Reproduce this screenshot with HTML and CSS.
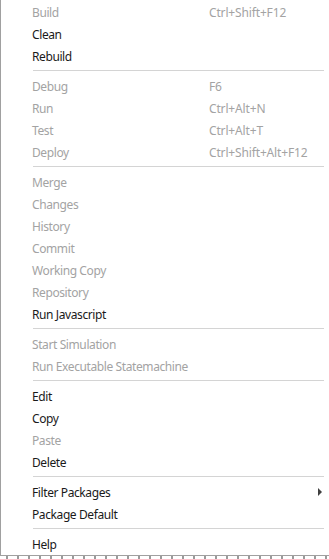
FILE: index.html
```html
<!DOCTYPE html>
<html lang="en">
<head>
    <meta charset="UTF-8">
    <title>Context Menu</title>
    <link rel="stylesheet" href="styles.css">
</head>
<body>
    <div class="menu">
        <div class="item disabled"><span class="label">Build</span><span class="key">Ctrl+Shift+F12</span></div>
        <div class="item"><span class="label">Clean</span></div>
        <div class="item"><span class="label">Rebuild</span></div>
        <div class="sep"></div>
        <div class="item disabled"><span class="label">Debug</span><span class="key">F6</span></div>
        <div class="item disabled"><span class="label">Run</span><span class="key">Ctrl+Alt+N</span></div>
        <div class="item disabled"><span class="label">Test</span><span class="key">Ctrl+Alt+T</span></div>
        <div class="item disabled"><span class="label">Deploy</span><span class="key">Ctrl+Shift+Alt+F12</span></div>
        <div class="sep"></div>
        <div class="item disabled"><span class="label">Merge</span></div>
        <div class="item disabled"><span class="label">Changes</span></div>
        <div class="item disabled"><span class="label">History</span></div>
        <div class="item disabled"><span class="label">Commit</span></div>
        <div class="item disabled"><span class="label">Working Copy</span></div>
        <div class="item disabled"><span class="label">Repository</span></div>
        <div class="item"><span class="label">Run Javascript</span></div>
        <div class="sep"></div>
        <div class="item disabled"><span class="label">Start Simulation</span></div>
        <div class="item disabled"><span class="label">Run Executable Statemachine</span></div>
        <div class="sep"></div>
        <div class="item"><span class="label">Edit</span></div>
        <div class="item"><span class="label">Copy</span></div>
        <div class="item disabled"><span class="label">Paste</span></div>
        <div class="item"><span class="label">Delete</span></div>
        <div class="sep"></div>
        <div class="item has-sub"><span class="label">Filter Packages</span><span class="arrow"></span></div>
        <div class="item"><span class="label">Package Default</span></div>
        <div class="sep"></div>
        <div class="item"><span class="label">Help</span></div>
    </div>
    <div class="behind"></div>
</body>
</html>
```

FILE: styles.css
```css
body {
    margin: 0;
    padding: 0;
    background-color: #ffffff;
    font-family: 'Noto Sans', 'Open Sans', sans-serif;
    font-size: 12px;
    width: 329px;
    height: 559px;
    overflow: hidden;
}
.menu {
    background-color: #ffffff;
    border-left: 1px solid #a0a0a0;
    border-bottom: 1px solid #a0a0a0;
    padding: 1px 0 0 0;
    box-sizing: border-box;
    height: 556px;
}
.item {
    display: flex;
    align-items: center;
    height: 22px;
    padding-left: 31px;
    color: #1a1a1a;
    position: relative;
}
.item.disabled {
    color: #a3a3a3;
}
.label {
    width: 177px;
    white-space: nowrap;
    letter-spacing: -0.4px;
}
.key {
    white-space: nowrap;
    letter-spacing: -0.15px;
}
.sep {
    height: 1px;
    background-color: #d4d4d4;
    margin: 3px 5px 4px 32px;
}
.arrow {
    position: absolute;
    right: 7px;
    top: 7px;
    width: 0;
    height: 0;
    border-top: 4px solid transparent;
    border-bottom: 4px solid transparent;
    border-left: 4px solid #404040;
}
.behind {
    height: 3px;
    background: repeating-linear-gradient(90deg, #ffffff 0, #ffffff 6px, #9a9a9a 6px, #9a9a9a 8px, #ffffff 8px, #ffffff 11px);
}
```
